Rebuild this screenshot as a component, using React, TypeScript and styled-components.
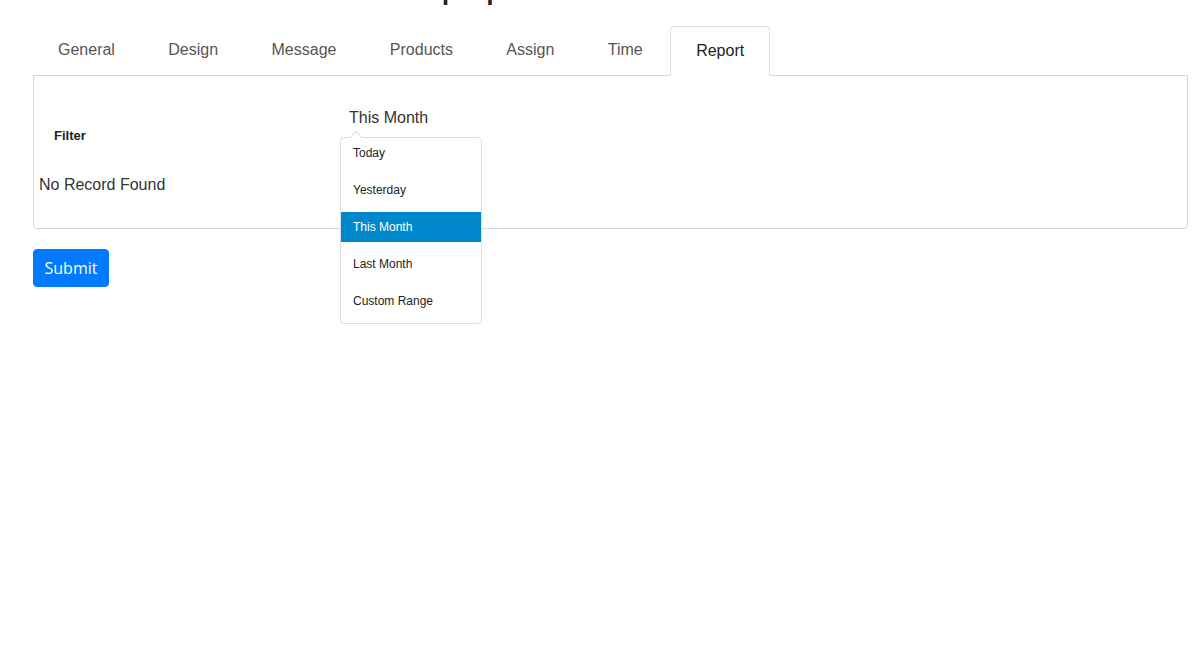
import React from "react";
import styled, { createGlobalStyle, css } from "styled-components";

const Global = createGlobalStyle`
  html, body { margin: 0; padding: 0; background: #fff; }
  body { font-family: "Liberation Sans", Arial, sans-serif; color: #333; overflow: hidden; }
  * { box-sizing: border-box; }
`;

const Page = styled.div`
  padding: 0 15px 0 33px;
  width: 1203px;
  height: 650px;
  overflow: hidden;
`;

const Title = styled.h1`
  margin: -37px 0 0 359px;
  font-size: 40px;
  line-height: 40px;
  height: 40px;
  font-weight: 400;
  color: #222;
  font-family: "Liberation Sans", Arial, sans-serif;
`;

const TabList = styled.ul`
  display: flex;
  list-style: none;
  margin: 23px 0 0 -1px;
  padding: 0;
`;

const Tab = styled.li<{ $active?: boolean }>`
  height: 50px;
  padding: 0 25px;
  margin-right: 1.4px;
  margin-bottom: -1px;
  border: 1px solid transparent;
  border-radius: 4px 4px 0 0;
  font-size: 16px;
  line-height: 46px;
  color: #555;
  background: transparent;
  position: relative;
  ${(p) =>
    p.$active &&
    css`
      border-color: #ddd #ddd transparent #ddd;
      background: #fff;
      color: #222;
      line-height: 47px;
    `}
`;

const Panel = styled.div`
  border: 1px solid #d6d6d6;
  border-radius: 0 0 4px 4px;
  padding: 32px 5px 32px;
  height: 154px;
`;

const FilterRow = styled.div`
  display: flex;
  align-items: flex-start;
`;

const FilterLabel = styled.div`
  width: 310px;
  padding-left: 15px;
  margin-top: 19px;
  font-size: 13px;
  line-height: 18px;
  font-weight: 700;
  color: #222;
`;

const Picker = styled.div`
  position: relative;
  font-size: 16px;
  line-height: 20px;
  color: #333;
`;

const Dropdown = styled.ul`
  position: absolute;
  top: 29px;
  left: -9px;
  width: 142px;
  margin: 0;
  padding: 0;
  list-style: none;
  background: #fff;
  border: 1px solid #ddd;
  border-radius: 4px;
  z-index: 10;

  &::before {
    content: "";
    position: absolute;
    top: -7px;
    left: 8px;
    border-left: 7px solid transparent;
    border-right: 7px solid transparent;
    border-bottom: 7px solid #ccc;
  }
  &::after {
    content: "";
    position: absolute;
    top: -6px;
    left: 9px;
    border-left: 6px solid transparent;
    border-right: 6px solid transparent;
    border-bottom: 6px solid #fff;
  }
`;

const RangeItem = styled.li<{ $active?: boolean }>`
  height: 30px;
  margin-bottom: 7px;
  padding: 0 12px;
  font-size: 12px;
  line-height: 30px;
  color: #222;
  ${(p) =>
    p.$active &&
    css`
      background: #0088cc;
      color: #fff;
    `}
`;

const NoRecord = styled.div`
  margin-top: 30px;
  font-size: 16px;
  line-height: 20px;
  color: #333;
`;

const SubmitButton = styled.button`
  margin-top: 20px;
  height: 38px;
  padding: 0 10.5px;
  border: 1px solid #007bff;
  border-radius: 4px;
  background: #007bff;
  color: #fff;
  font-family: "Segoe UI", "Open Sans", sans-serif;
  font-size: 16px;
  line-height: 24px;
  cursor: pointer;
`;

const tabs = ["General", "Design", "Message", "Products", "Assign", "Time", "Report"];
const ranges = ["Today", "Yesterday", "This Month", "Last Month", "Custom Range"];

export default function App() {
  return (
    <Page>
      <Global />
      <Title>Popup</Title>
      <TabList>
        {tabs.map((t) => (
          <Tab key={t} $active={t === "Report"}>
            {t}
          </Tab>
        ))}
      </TabList>
      <Panel>
        <FilterRow>
          <FilterLabel>Filter</FilterLabel>
          <Picker>
            This Month
            <Dropdown>
              {ranges.map((r) => (
                <RangeItem key={r} $active={r === "This Month"}>
                  {r}
                </RangeItem>
              ))}
            </Dropdown>
          </Picker>
        </FilterRow>
        <NoRecord>No Record Found</NoRecord>
      </Panel>
      <SubmitButton>Submit</SubmitButton>
    </Page>
  );
}
